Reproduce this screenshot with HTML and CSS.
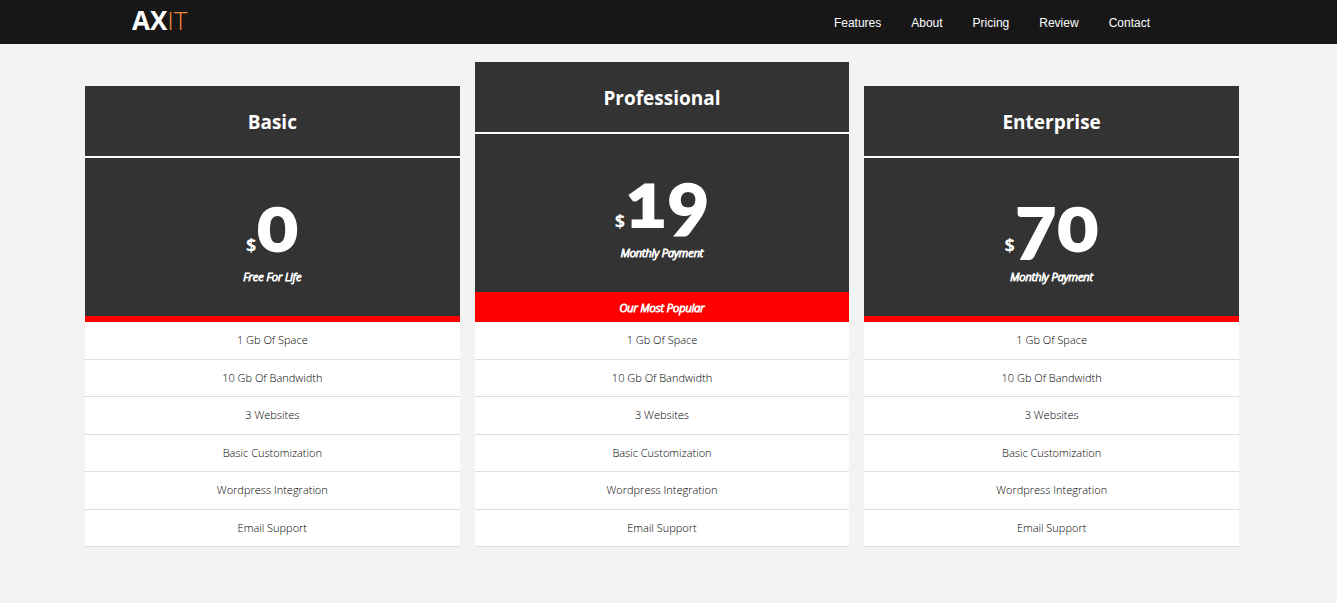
FILE: index.html
```html
<!DOCTYPE html>
<html lang="en">
<head>
<meta charset="utf-8">
<meta name="viewport" content="width=device-width, initial-scale=1">
<title>AXIT Pricing</title>
<link rel="stylesheet" href="styles.css">
</head>
<body>
<header class="topbar">
  <a class="logo" href="#">AX<span class="logo-accent">IT</span></a>
  <nav class="nav">
    <a href="#">Features</a>
    <a href="#">About</a>
    <a href="#">Pricing</a>
    <a href="#">Review</a>
    <a href="#">Contact</a>
  </nav>
</header>
<main class="plans">
  <section class="plan">
    <h2 class="plan-name">Basic</h2>
    <div class="plan-price">
      <p class="amount"><span class="currency">$</span>0</p>
      <p class="note">Free For Life</p>
    </div>
    <div class="strip"></div>
    <ul class="features">
      <li>1 Gb Of Space</li>
      <li>10 Gb Of Bandwidth</li>
      <li>3 Websites</li>
      <li>Basic Customization</li>
      <li>Wordpress Integration</li>
      <li>Email Support</li>
    </ul>
  </section>
  <section class="plan">
    <h2 class="plan-name">Professional</h2>
    <div class="plan-price">
      <p class="amount"><span class="currency">$</span>19</p>
      <p class="note">Monthly Payment</p>
    </div>
    <p class="strip strip-popular">Our Most Popular</p>
    <ul class="features">
      <li>1 Gb Of Space</li>
      <li>10 Gb Of Bandwidth</li>
      <li>3 Websites</li>
      <li>Basic Customization</li>
      <li>Wordpress Integration</li>
      <li>Email Support</li>
    </ul>
  </section>
  <section class="plan">
    <h2 class="plan-name">Enterprise</h2>
    <div class="plan-price">
      <p class="amount"><span class="currency">$</span>70</p>
      <p class="note">Monthly Payment</p>
    </div>
    <div class="strip"></div>
    <ul class="features">
      <li>1 Gb Of Space</li>
      <li>10 Gb Of Bandwidth</li>
      <li>3 Websites</li>
      <li>Basic Customization</li>
      <li>Wordpress Integration</li>
      <li>Email Support</li>
    </ul>
  </section>
</main>
</body>
</html>
```
FILE: styles.css
```css
* {
  box-sizing: border-box;
  margin: 0;
  padding: 0;
}

body {
  background: #f3f3f3;
  color: #000;
  font-family: "Open Sans", sans-serif;
}

.topbar {
  display: flex;
  align-items: center;
  justify-content: space-between;
  min-height: 44px;
  padding: 0 187px 0 132px;
  background: #171717;
}

.logo {
  padding-bottom: 4px;
  color: #fff;
  font-size: 26px;
  font-weight: 700;
  line-height: 36px;
  text-decoration: none;
}

.logo-accent {
  color: #f58a3c;
  font-weight: 300;
}

.nav {
  display: flex;
  gap: 30px;
  padding-top: 2px;
}

.nav a {
  color: #fff;
  font-family: "Liberation Sans", Arial, sans-serif;
  font-size: 12px;
  line-height: 16px;
  text-decoration: none;
}

.plans {
  display: grid;
  grid-template-columns: repeat(3, 1fr);
  align-items: end;
  gap: 15px;
  padding: 18px 98px 56px 85px;
  text-align: center;
}

.plan-name {
  padding-top: 2px;
  border-bottom: 2px solid #fff;
  background: #333;
  color: #fff;
  font-size: 19px;
  font-weight: 700;
  line-height: 68px;
}

.plan-price {
  padding: 27px 0 32px;
  background: #333;
  color: #fff;
}

.amount {
  font-family: Lato, sans-serif;
  font-size: 78px;
  font-weight: 800;
  font-variant-numeric: oldstyle-nums;
  line-height: 74px;
}

.currency {
  font-family: "Open Sans", sans-serif;
  font-size: 18px;
  font-weight: 700;
  line-height: 1;
}

.note,
.strip-popular {
  font-size: 11px;
  font-style: italic;
  font-weight: 300;
  -webkit-text-stroke: 1px currentColor;
}

.note {
  margin-top: 11px;
  line-height: 14px;
}

.strip {
  min-height: 6px;
  background: #f00;
}

.strip-popular {
  padding-top: 2px;
  color: #fff;
  line-height: 28px;
}

.features {
  display: grid;
  grid-auto-rows: 1fr;
  min-height: 225px;
  background: #fff;
  font-size: 11px;
  font-weight: 300;
  line-height: 36px;
  list-style: none;
}

.features li {
  border-bottom: 1px solid #ddd;
}
```
